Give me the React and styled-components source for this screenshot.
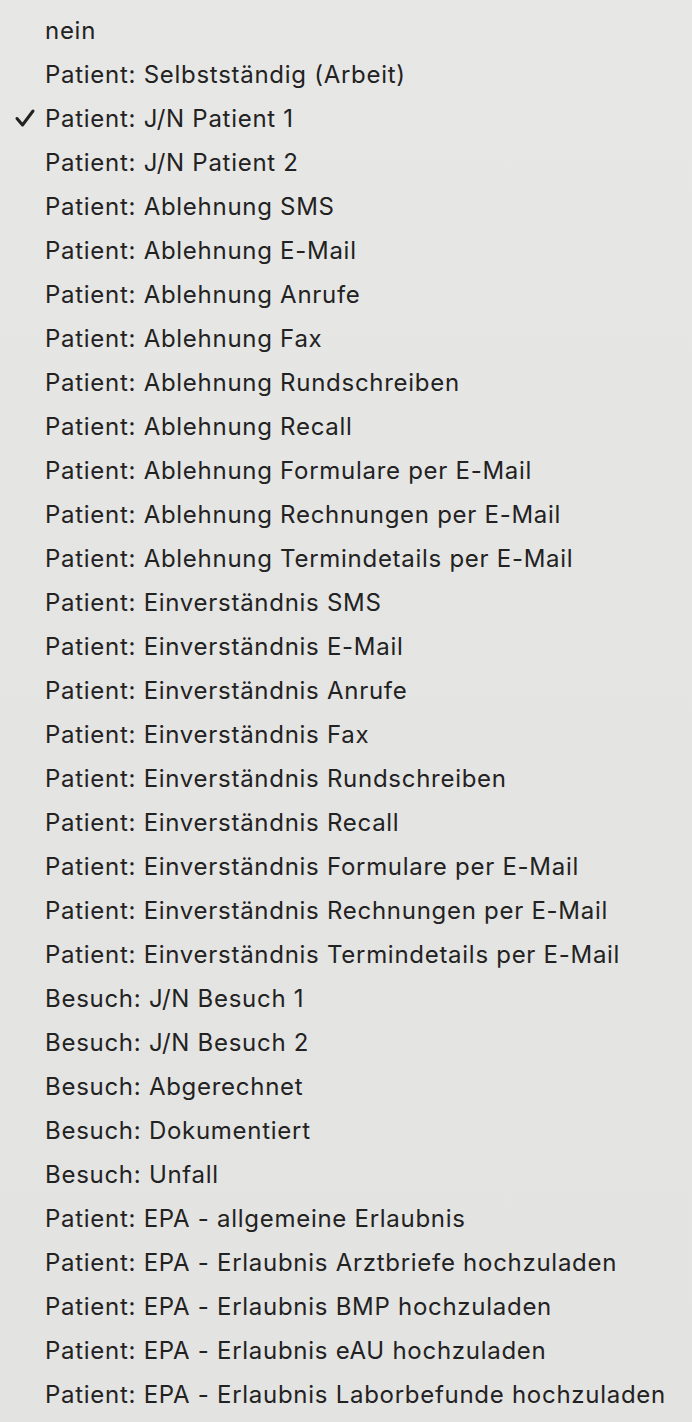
import React from "react";
import styled, { createGlobalStyle } from "styled-components";

const Global = createGlobalStyle`
  html, body { margin: 0; padding: 0; background: #e4e4e3; }
  body { font-family: Inter, "Noto Sans", "Liberation Sans", sans-serif; }
`;

const Menu = styled.ul`
  list-style: none;
  margin: 0;
  padding: 8px 0 0 0;
  width: 692px;
  min-height: 1422px;
  box-sizing: border-box;
  background: linear-gradient(180deg, #e7e7e6 0%, #e4e4e3 50%, #e3e3e2 100%);
`;

const Item = styled.li`
  display: flex;
  align-items: center;
  height: 44px;
  padding-left: 13px;
  color: #222222;
  font-size: 24px;
  letter-spacing: 0.72px;
  white-space: nowrap;
`;

const Check = styled.span`
  width: 32px;
  display: flex;
  align-items: center;
  justify-content: flex-start;
`;

const items = [
  "nein",
  "Patient: Selbstständig (Arbeit)",
  "Patient: J/N Patient 1",
  "Patient: J/N Patient 2",
  "Patient: Ablehnung SMS",
  "Patient: Ablehnung E-Mail",
  "Patient: Ablehnung Anrufe",
  "Patient: Ablehnung Fax",
  "Patient: Ablehnung Rundschreiben",
  "Patient: Ablehnung Recall",
  "Patient: Ablehnung Formulare per E-Mail",
  "Patient: Ablehnung Rechnungen per E-Mail",
  "Patient: Ablehnung Termindetails per E-Mail",
  "Patient: Einverständnis SMS",
  "Patient: Einverständnis E-Mail",
  "Patient: Einverständnis Anrufe",
  "Patient: Einverständnis Fax",
  "Patient: Einverständnis Rundschreiben",
  "Patient: Einverständnis Recall",
  "Patient: Einverständnis Formulare per E-Mail",
  "Patient: Einverständnis Rechnungen per E-Mail",
  "Patient: Einverständnis Termindetails per E-Mail",
  "Besuch: J/N Besuch 1",
  "Besuch: J/N Besuch 2",
  "Besuch: Abgerechnet",
  "Besuch: Dokumentiert",
  "Besuch: Unfall",
  "Patient: EPA - allgemeine Erlaubnis",
  "Patient: EPA - Erlaubnis Arztbriefe hochzuladen",
  "Patient: EPA - Erlaubnis BMP hochzuladen",
  "Patient: EPA - Erlaubnis eAU hochzuladen",
  "Patient: EPA - Erlaubnis Laborbefunde hochzuladen",
];

const CheckMark = () => (
  <svg width="24" height="20" viewBox="0 0 24 20">
    <path d="M4 10.5 L9.5 17 L20 3" fill="none" stroke="#222222" strokeWidth="3" strokeLinecap="round" strokeLinejoin="round" />
  </svg>
);

export default function App() {
  return (
    <>
      <Global />
      <Menu>
        {items.map((t, i) => (
          <Item key={i}>
            <Check>{i === 2 ? <CheckMark /> : null}</Check>
            {t}
          </Item>
        ))}
      </Menu>
    </>
  );
}
